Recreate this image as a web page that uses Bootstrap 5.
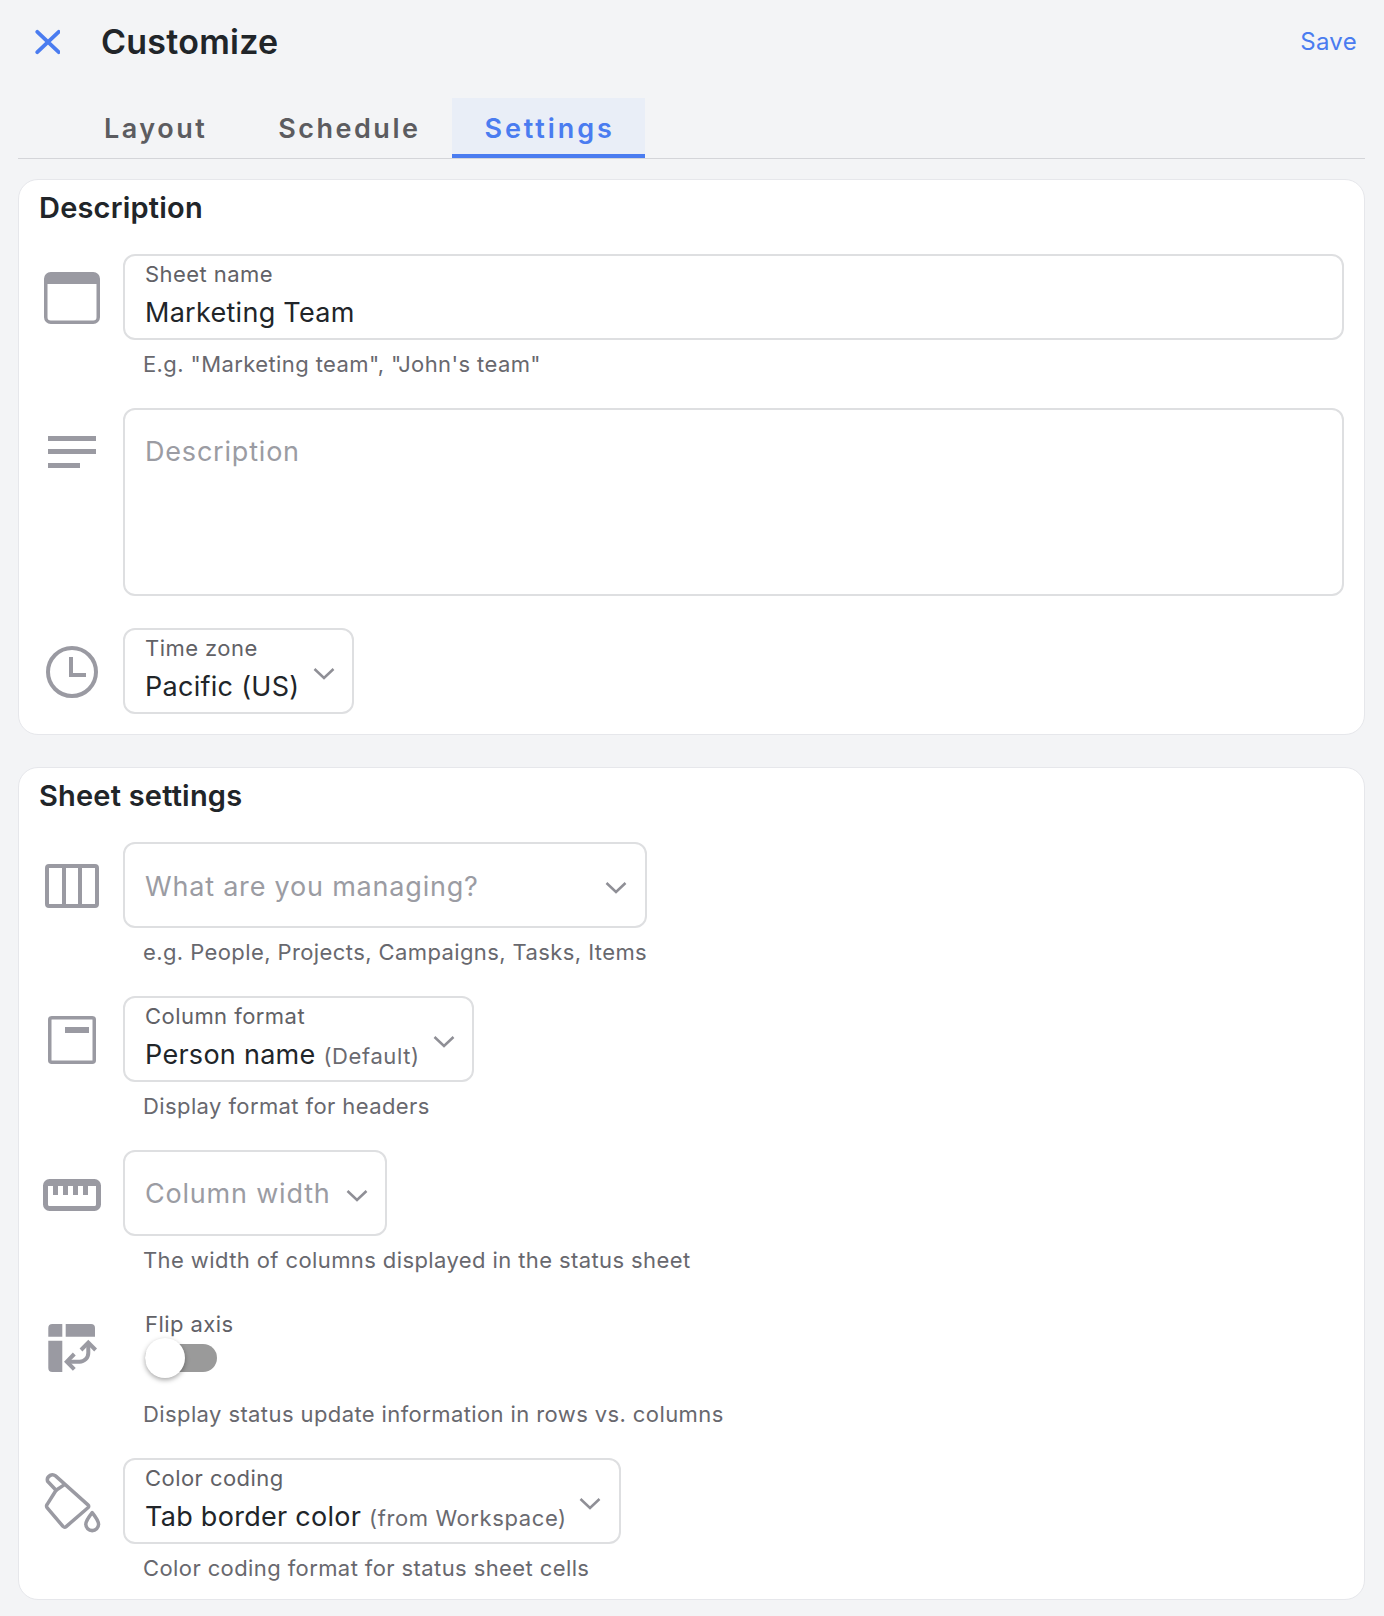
<!DOCTYPE html>
<html lang="en">
<head>
<meta charset="utf-8">
<title>Customize</title>
<link href="https://cdn.jsdelivr.net/npm/bootstrap@5.3.0/dist/css/bootstrap.min.css" rel="stylesheet">
<style>
html,body{height:100%}
body{background:#f3f4f6;font-family:Inter,"Noto Sans",sans-serif;color:#212529}
.shell{width:1384px;height:1616px;padding:0 19px 0 18px;overflow:hidden}
.topbar{height:98px;padding:0 0 14px 12px}
.closebtn{width:30px;height:30px;margin-right:41px;background:none;border:0;padding:0;display:block}
.closebtn svg{display:block}
.page-title{font-size:34px;font-weight:600;margin:0;letter-spacing:.25px}
.savebtn{font-size:24px;color:#4a7cf0;background:none;border:0;padding:0 8px 0 0;letter-spacing:.3px}
.tabstrip{height:61px;border-bottom:1px solid #d4d5d9;padding-left:53px}
.tabbtn{font-size:27px;font-weight:600;letter-spacing:2.5px;color:#5c5c60;padding:0 33px;height:60px;line-height:61px;text-decoration:none;display:block}
.tabbtn.first-tab{padding-right:38px}
.tabbtn.second-tab{padding-right:32px}
.tabbtn.is-on{color:#4a7cf0;background:#e9eef7;border-bottom:4px solid #4a7cf0;letter-spacing:2.9px;padding:0 30px 0 32px}
.panel{background:#fff;border:1px solid #e6e7eb;border-radius:20px;padding:0 20px}
.panel.first{margin-top:20px;height:556px}
.panel.second{margin-top:32px;height:833px}
.panel-title{font-size:29px;font-weight:600;line-height:34px;margin:0;padding-top:11px;height:74px;letter-spacing:.2px}
.iconcol{width:66px;margin-right:18px;flex:none;display:flex;justify-content:center}
.iconcol svg{display:block;flex:none}
.nudged{padding-top:1px}
.nudged-more{padding-top:4px}
.fieldbox{height:86px;border:2px solid #dedfe1;border-radius:12px;background:#fff;padding:0 20px;position:relative;display:block}
.fieldbox.wide{flex:1}
.flabel{font-size:22px;line-height:26px;color:#616166;letter-spacing:.45px;padding-top:5px;height:31px;white-space:nowrap}
.fvalue{font-size:27px;line-height:36px;color:#212529;letter-spacing:.28px;margin-top:8px;white-space:nowrap}
.fvalue small{font-size:22px;color:#6a6a70;letter-spacing:.6px}
.fplace{font-size:27px;line-height:85px;color:#9b9ca3;letter-spacing:.8px;white-space:nowrap}
.fplace.mid{line-height:84px}
.textbox{flex:1;height:188px;border:2px solid #dedfe1;border-radius:12px;padding:0 20px}
.textbox .fplace{line-height:84px}
.chev{position:absolute;display:block}
.hint{font-size:22px;line-height:28px;color:#68686e;letter-spacing:.4px;margin-left:84px;padding-left:20px;white-space:nowrap}
.togglewrap{padding-left:22px}
.togglelabel{font-size:22px;line-height:26px;color:#616166;letter-spacing:.45px;white-space:nowrap}
.tracky{width:72px;height:28px;background:#9a9a9a;border-radius:14px;position:relative;margin-top:7px}
.knob{width:40px;height:40px;border-radius:50%;background:#fff;position:absolute;left:0;top:-6px;box-shadow:0 2px 5px rgba(0,0,0,.35)}
</style>
</head>
<body>
<div class="shell">
  <div class="topbar d-flex align-items-center justify-content-between">
    <div class="d-flex align-items-center">
      <button class="closebtn" aria-label="Close"><svg width="30" height="30" viewBox="0 0 30 30"><path d="M7.300 4.800 L28.700 25.200 M28.700 4.800 L7.300 25.200" stroke="#4a7cf0" stroke-width="3.800" stroke-linecap="round" fill="none"/></svg></button>
      <h1 class="page-title">Customize</h1>
    </div>
    <button class="savebtn">Save</button>
  </div>
  <nav class="tabstrip d-flex">
    <a class="tabbtn first-tab" href="#">Layout</a>
    <a class="tabbtn second-tab" href="#">Schedule</a>
    <a class="tabbtn is-on" href="#">Settings</a>
  </nav>

  <section class="panel first">
    <h2 class="panel-title">Description</h2>

    <div class="d-flex align-items-center">
      <div class="iconcol nudged"><svg width="56" height="52" viewBox="0 0 56 52"><rect x="1.750" y="1.750" width="52.500" height="48.500" rx="5" fill="none" stroke="#9a9aa2" stroke-width="3.500"/><path d="M1 12 V6 a5 5 0 0 1 5-5 H50 a5 5 0 0 1 5 5 V12 Z" fill="#9a9aa2"/></svg></div>
      <div class="form-control fieldbox wide">
        <div class="flabel">Sheet name</div>
        <div class="fvalue">Marketing Team</div>
      </div>
    </div>
    <div class="hint" style="margin-top:10px">E.g. "Marketing team", "John's team"</div>

    <div class="d-flex align-items-start" style="margin-top:30px">
      <div class="iconcol" style="padding-top:28px"><svg width="48" height="32" viewBox="0 0 48 32"><path d="M0 0h48v5H0zM0 13h48v5H0zM0 27h32v5H0z" fill="#9a9aa2"/></svg></div>
      <div class="textbox"><div class="fplace">Description</div></div>
    </div>

    <div class="d-flex align-items-center" style="margin-top:32px">
      <div class="iconcol nudged"><svg width="52" height="52" viewBox="0 0 52 52"><circle cx="26" cy="26" r="24" fill="none" stroke="#9a9aa2" stroke-width="4"/><path d="M25 11 V29 H40" fill="none" stroke="#9a9aa2" stroke-width="4"/></svg></div>
      <div class="form-control fieldbox" style="width:231px">
        <div class="flabel">Time zone</div>
        <div class="fvalue">Pacific (US)</div>
        <svg class="chev" style="left:188px;top:37px" width="22" height="13" viewBox="0 0 22 13"><path d="M1.500 2 L11 11 L20.500 2" fill="none" stroke="#8f8f96" stroke-width="2.500"/></svg>
      </div>
    </div>
  </section>

  <section class="panel second">
    <h2 class="panel-title">Sheet settings</h2>

    <div class="d-flex align-items-center">
      <div class="iconcol nudged"><svg width="54" height="44" viewBox="0 0 54 44"><rect x="2" y="2" width="50" height="40" rx="2" fill="none" stroke="#9a9aa2" stroke-width="4"/><path d="M19 2V42M35 2V42" stroke="#9a9aa2" stroke-width="4"/></svg></div>
      <div class="form-control fieldbox" style="width:524px">
        <div class="fplace">What are you managing?</div>
        <svg class="chev" style="left:480px;top:37px" width="22" height="13" viewBox="0 0 22 13"><path d="M1.500 2 L11 11 L20.500 2" fill="none" stroke="#8f8f96" stroke-width="2.500"/></svg>
      </div>
    </div>
    <div class="hint" style="margin-top:10px">e.g. People, Projects, Campaigns, Tasks, Items</div>

    <div class="d-flex align-items-center" style="margin-top:30px">
      <div class="iconcol nudged"><svg width="48" height="48" viewBox="0 0 48 48"><rect x="1.750" y="1.750" width="44.500" height="44.500" rx="2" fill="none" stroke="#9a9aa2" stroke-width="3.500"/><rect x="17" y="11" width="24" height="6" fill="#9a9aa2"/></svg></div>
      <div class="form-control fieldbox" style="width:351px">
        <div class="flabel">Column format</div>
        <div class="fvalue">Person name <small>(Default)</small></div>
        <svg class="chev" style="left:308px;top:37px" width="22" height="13" viewBox="0 0 22 13"><path d="M1.500 2 L11 11 L20.500 2" fill="none" stroke="#8f8f96" stroke-width="2.500"/></svg>
      </div>
    </div>
    <div class="hint" style="margin-top:10px">Display format for headers</div>

    <div class="d-flex align-items-center" style="margin-top:30px">
      <div class="iconcol nudged-more"><svg width="58" height="32" viewBox="0 0 58 32"><rect x="2.500" y="2.500" width="53" height="27" rx="4" fill="none" stroke="#9a9aa2" stroke-width="5"/><rect x="2" y="2" width="54" height="5" fill="#9a9aa2"/><path d="M10 2h5v14h-5zM20 2h5v14h-5zM30 2h5v14h-5zM40 2h5v14h-5z" fill="#9a9aa2"/></svg></div>
      <div class="form-control fieldbox" style="width:264px">
        <div class="fplace mid">Column width</div>
        <svg class="chev" style="left:221px;top:37px" width="22" height="13" viewBox="0 0 22 13"><path d="M1.500 2 L11 11 L20.500 2" fill="none" stroke="#8f8f96" stroke-width="2.500"/></svg>
      </div>
    </div>
    <div class="hint" style="margin-top:10px">The width of columns displayed in the status sheet</div>

    <div class="d-flex align-items-start" style="margin-top:37px">
      <div class="iconcol" style="padding-top:9px"><svg width="56" height="56" viewBox="-1 0 56 56"><path d="M3.300 16.700V8a4 4 0 0 1 4-4H17.300V16.700ZM20.700 4H46a4 4 0 0 1 4 4V16.700H20.700ZM3.300 20.700H17.300V52H7.300a4 4 0 0 1-4-4Z" fill="#9a9aa2"/><path d="M43.300 23V33a8.700 8.700 0 0 1-8.700 8.700H24" fill="none" stroke="#9a9aa2" stroke-width="4"/><path d="M36 30L43.300 22.700L50.600 30M29.300 34L21.800 41.700L29.300 49.400" fill="none" stroke="#9a9aa2" stroke-width="4"/></svg></div>
      <div class="togglewrap">
        <div class="togglelabel">Flip axis</div>
        <div class="tracky" role="switch" aria-checked="false"><div class="knob"></div></div>
      </div>
    </div>
    <div class="hint" style="margin-top:24px">Display status update information in rows vs. columns</div>

    <div class="d-flex align-items-center" style="margin-top:30px">
      <div class="iconcol nudged-more"><svg width="68" height="68" viewBox="0 0 64 64"><path d="M17 20 L8.500 33.500 Q7.500 35 8.700 36.500 L23.500 54 Q25 55.500 26.500 54.200 L47 36.500 Q48.500 35 47 33.700 L16.500 6.500 Q14 4.500 11.500 6 Q8 8 9 11.500 Z" fill="none" stroke="#9a9aa2" stroke-width="3.300" stroke-linejoin="round"/><path d="M17 20 L26 14" fill="none" stroke="#9a9aa2" stroke-width="3.300"/><path d="M51 41 C55 46 57 49 57 52 a6 6 0 0 1-12 0 C45 49 47 46 51 41Z" fill="none" stroke="#9a9aa2" stroke-width="3.300" stroke-linejoin="round"/></svg></div>
      <div class="form-control fieldbox" style="width:498px">
        <div class="flabel">Color coding</div>
        <div class="fvalue">Tab border color <small>(from Workspace)</small></div>
        <svg class="chev" style="left:454px;top:37px" width="22" height="13" viewBox="0 0 22 13"><path d="M1.500 2 L11 11 L20.500 2" fill="none" stroke="#8f8f96" stroke-width="2.500"/></svg>
      </div>
    </div>
    <div class="hint" style="margin-top:10px">Color coding format for status sheet cells</div>
  </section>
</div>
<script src="https://cdn.jsdelivr.net/npm/bootstrap@5.3.0/dist/js/bootstrap.bundle.min.js"></script>
</body>
</html>
